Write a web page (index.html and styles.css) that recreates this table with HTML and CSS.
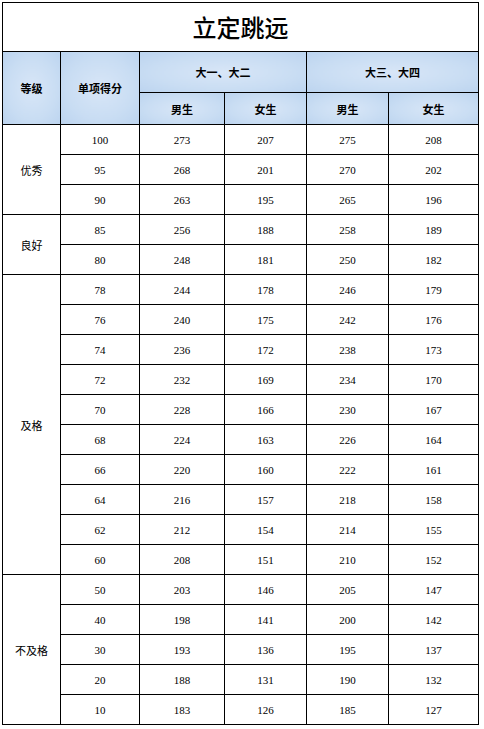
FILE: index.html
```html
<!DOCTYPE html>
<html lang="zh-CN">
<head>
<meta charset="utf-8">
<title>立定跳远</title>
<link rel="stylesheet" href="styles.css">
</head>
<body>
<table class="sheet">
  <colgroup>
    <col class="c1"><col class="c2"><col class="c3"><col class="c4"><col class="c5"><col class="c6">
  </colgroup>
  <tr class="r-title"><td class="title" colspan="6">立定跳远</td></tr>
  <tr class="r-h1">
    <td class="hd" rowspan="2">等级</td>
    <td class="hd" rowspan="2">单项得分</td>
    <td class="hd" colspan="2">大一、大二</td>
    <td class="hd" colspan="2">大三、大四</td>
  </tr>
  <tr class="r-h2">
    <td class="hd">男生</td><td class="hd">女生</td><td class="hd">男生</td><td class="hd">女生</td>
  </tr>
  <tr><td class="lvl" rowspan="3">优秀</td><td>100</td><td>273</td><td>207</td><td>275</td><td>208</td></tr>
  <tr><td>95</td><td>268</td><td>201</td><td>270</td><td>202</td></tr>
  <tr><td>90</td><td>263</td><td>195</td><td>265</td><td>196</td></tr>
  <tr><td class="lvl" rowspan="2">良好</td><td>85</td><td>256</td><td>188</td><td>258</td><td>189</td></tr>
  <tr><td>80</td><td>248</td><td>181</td><td>250</td><td>182</td></tr>
  <tr><td class="lvl" rowspan="10">及格</td><td>78</td><td>244</td><td>178</td><td>246</td><td>179</td></tr>
  <tr><td>76</td><td>240</td><td>175</td><td>242</td><td>176</td></tr>
  <tr><td>74</td><td>236</td><td>172</td><td>238</td><td>173</td></tr>
  <tr><td>72</td><td>232</td><td>169</td><td>234</td><td>170</td></tr>
  <tr><td>70</td><td>228</td><td>166</td><td>230</td><td>167</td></tr>
  <tr><td>68</td><td>224</td><td>163</td><td>226</td><td>164</td></tr>
  <tr><td>66</td><td>220</td><td>160</td><td>222</td><td>161</td></tr>
  <tr><td>64</td><td>216</td><td>157</td><td>218</td><td>158</td></tr>
  <tr><td>62</td><td>212</td><td>154</td><td>214</td><td>155</td></tr>
  <tr><td>60</td><td>208</td><td>151</td><td>210</td><td>152</td></tr>
  <tr><td class="lvl" rowspan="5">不及格</td><td>50</td><td>203</td><td>146</td><td>205</td><td>147</td></tr>
  <tr><td>40</td><td>198</td><td>141</td><td>200</td><td>142</td></tr>
  <tr><td>30</td><td>193</td><td>136</td><td>195</td><td>137</td></tr>
  <tr><td>20</td><td>188</td><td>131</td><td>190</td><td>132</td></tr>
  <tr><td>10</td><td>183</td><td>126</td><td>185</td><td>127</td></tr>
</table>
</body>
</html>
```
FILE: styles.css
```css
html, body {
  margin: 0;
  padding: 0;
  background: #ffffff;
}
body {
  padding: 2px 0 0 2px;
}
.sheet {
  border-collapse: collapse;
  table-layout: fixed;
  width: 476px;
  font-family: "Liberation Serif", "Noto Sans CJK SC", serif;
  font-size: 11px;
  color: #000;
}
.c1 { width: 58px; }
.c2 { width: 79px; }
.c3 { width: 85px; }
.c4 { width: 82px; }
.c5 { width: 82px; }
.c6 { width: 90px; }
.sheet td {
  border: 1px solid #000;
  padding: 0;
  text-align: center;
  vertical-align: middle;
  height: 29px;
  line-height: 12px;
}
.sheet tr.r-title td { height: 48px; }
.sheet tr.r-h1 td { height: 40px; }
.sheet tr.r-h2 td { height: 31px; }
.title {
  font-family: "Noto Sans CJK SC", serif;
  font-size: 24px;
  line-height: 26px;
  font-weight: 500;
}
.hd {
  font-family: "Noto Sans CJK SC", sans-serif;
  font-weight: 700;
  font-size: 11px;
  background: radial-gradient(ellipse at center, #d8e6f7 0%, #c9ddf3 60%, #bcd4ef 100%);
}
.lvl {
  font-family: "Noto Sans CJK SC", sans-serif;
  font-size: 11px;
}
```
